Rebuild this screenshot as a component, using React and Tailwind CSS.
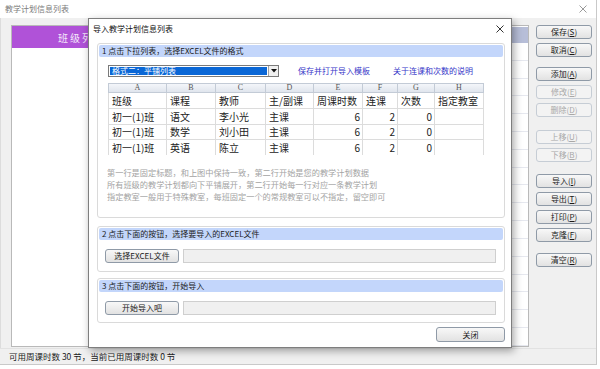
import React from "react";

function XIcon({ className = "", color = "#444" }) {
  return (
    <svg width="8" height="8" viewBox="0 0 8 8" className={className}>
      <path d="M0.5 0.5 L7.5 7.5 M7.5 0.5 L0.5 7.5" stroke={color} strokeWidth="1" fill="none" />
    </svg>
  );
}

function Btn({ label, k, disabled, className = "" }) {
  return (
    <div
      className={`flex items-center justify-center h-[14px] rounded-[3px] border text-[8px] leading-none ${
        disabled
          ? "border-[#c6cdd5] text-[#a8a8a8] bg-[#f3f3f3]"
          : "border-[#8f9aa7] text-[#1a1a1a] bg-linear-to-b from-[#f8f8f8] to-[#e2e2e2]"
      } ${className}`}
    >
      <span>
        {label}(<span className="underline">{k}</span>)
      </span>
    </div>
  );
}

function PlainBtn({ children, className = "" }) {
  return (
    <div
      className={`flex items-center justify-center rounded-[3px] border border-[#8f9aa7] text-[8px] leading-none text-[#1a1a1a] bg-linear-to-b from-[#f8f8f8] to-[#e2e2e2] ${className}`}
    >
      {children}
    </div>
  );
}

const cols = ["A", "B", "C", "D", "E", "F", "G", "H"];
const rows = [
  ["班级", "课程", "教师", "主/副课", "周课时数", "连课", "次数", "指定教室"],
  ["初一(1)班", "语文", "李小光", "主课", "6", "2", "0", ""],
  ["初一(1)班", "数学", "刘小田", "主课", "6", "2", "0", ""],
  ["初一(1)班", "英语", "陈立", "主课", "6", "2", "0", ""],
];
const rowH = ["h-[16px]", "h-[16px]", "h-[15px]", "h-[15px]"];

function SectionHeader({ children }) {
  return (
    <div className="h-[12px] bg-[#c3d6fb] rounded-[2px] flex items-center pl-[3px] text-[8px] leading-none text-[#1a1a1a]">
      {children}
    </div>
  );
}

export default function App() {
  return (
    <div className="relative w-[600px] h-[369px] overflow-hidden bg-white font-['Noto_Sans_CJK_SC','Noto_Sans',sans-serif]">
      {/* Background window */}
      <div className="flex flex-col w-[597px] h-[365px] border-r border-b border-[#c9c9c9] bg-[#f0f0f0]">
        <div className="h-[18px] flex items-center justify-between bg-white pl-[5px] pr-[9px]">
          <span className="text-[8px] leading-none text-[#7c7c7c]">教学计划信息列表</span>
          <XIcon color="#9a9a9a" />
        </div>
        <div className="flex-1 flex pt-[7px] pl-[10px] border-l border-[#dcdcdc]">
          {/* left class list */}
          <div className="w-[142px] h-[322px] bg-white border border-[#b9b9b9] flex flex-col">
            <div className="h-[22px] bg-[#b052d8] flex items-center justify-center text-[10px] tracking-[2px] text-[#f4e8fa]">
              班级列表
            </div>
          </div>
          {/* main grid */}
          <div className="ml-[2px] w-[374px] h-[322px] bg-white border border-[#b9b9b9] flex flex-col">
            <div className="h-[16px] bg-[#b7bed8] mt-[1px]" />
            {Array.from({ length: 17 }).map((_, i) => (
              <div key={i} className="h-[18px] border-b border-[#e6e8ef]" />
            ))}
          </div>
          {/* buttons */}
          <div className="ml-[7px] w-[56px] flex flex-col">
            <Btn label="保存" k="S" />
            <Btn label="取消" k="C" className="mt-[4px]" />
            <Btn label="添加" k="A" className="mt-[10px]" />
            <Btn label="修改" k="E" disabled className="mt-[4px]" />
            <Btn label="删除" k="D" disabled className="mt-[4px]" />
            <Btn label="上移" k="U" disabled className="mt-[13px]" />
            <Btn label="下移" k="B" disabled className="mt-[4px]" />
            <Btn label="导入" k="I" className="mt-[12px]" />
            <Btn label="导出" k="T" className="mt-[4px]" />
            <Btn label="打印" k="P" className="mt-[4px]" />
            <Btn label="克隆" k="F" className="mt-[4px]" />
            <Btn label="清空" k="R" className="mt-[11px]" />
          </div>
        </div>
        <div className="h-[16px] flex items-center pl-[9px] text-[8.5px] leading-none text-[#1a1a1a] border-t border-[#e2e2e2]">
          可用周课时数 30 节，当前已用周课时数 0 节
        </div>
      </div>

      {/* Dialog */}
      <div className="absolute left-[88px] top-[18px] w-[424px] h-[330px] bg-white border border-[#7e7e7e] shadow-[2px_3px_8px_rgba(0,0,0,0.35)] flex flex-col">
        <div className="h-[19px] flex items-center justify-between pl-[4px] pr-[7px]">
          <span className="text-[8px] leading-none text-[#111]">导入教学计划信息列表</span>
          <XIcon color="#333" />
        </div>

        {/* Section 1 */}
        <div className="mt-[5px] ml-[8px] w-[408px] h-[175px] border border-[#dadada] rounded-[3px] p-[1px] flex flex-col">
          <SectionHeader>1 点击下拉列表，选择EXCEL文件的格式</SectionHeader>
          <div className="mt-[8px] ml-[9px] flex items-center">
            <div className="w-[171px] h-[12px] border border-[#7a7a7a] bg-white flex">
              <div className="flex-1 m-[1px] bg-[#0a67d6] flex items-center pl-[2px] text-[8px] leading-none text-white">
                格式二：平铺列表
              </div>
              <div className="w-[10px] border-l border-[#a0a0a0] bg-[#f0f0f0] flex items-center justify-center">
                <svg width="6" height="4" viewBox="0 0 6 4">
                  <path d="M0 0 L6 0 L3 3.5 Z" fill="#111" />
                </svg>
              </div>
            </div>
            <span className="ml-[19px] text-[8px] leading-none text-[#3535c8]">保存并打开导入模板</span>
            <span className="ml-[23px] text-[8px] leading-none text-[#3535c8]">关于连课和次数的说明</span>
          </div>
          {/* table */}
          <div className="mt-[6px] ml-[9px] w-[376px] grid grid-cols-[59px_49px_50px_48px_49px_35px_37px_49px]">
            {cols.map((c) => (
              <div
                key={c}
                className="h-[10px] flex items-center justify-center border-t border-b border-r border-[#c3cbd6] first:border-l bg-linear-to-b from-[#f4f6fa] to-[#e0e5ed] font-['Liberation_Serif',serif] text-[8px] leading-none text-[#555]"
              >
                {c}
              </div>
            ))}
            {rows.map((r, ri) =>
              r.map((cell, ci) => {
                const num = ri > 0 && ci >= 4 && ci <= 6;
                return (
                  <div
                    key={ri + "-" + ci}
                    className={`${rowH[ri]} flex items-center ${
                      num ? "justify-end pr-[2px]" : "pl-[3px]"
                    } border-r border-[#dcdcdc] ${ri < 3 ? "border-b" : ""} ${
                      ci === 0 ? "border-l" : ""
                    } text-[10px] leading-none text-[#222] whitespace-nowrap overflow-hidden`}
                  >
                    {cell}
                  </div>
                );
              })
            )}
          </div>
          <div className="mt-[11px] ml-[8px] text-[8.2px] leading-[12px] text-[#a3a3a3] whitespace-nowrap">
            <div>第一行是固定标题，和上图中保持一致，第二行开始是您的教学计划数据</div>
            <div>所有班级的教学计划都向下平铺展开，第二行开始每一行对应一条教学计划</div>
            <div>指定教室一般用于特殊教室，每班固定一个的常规教室可以不指定，留空即可</div>
          </div>
        </div>

        {/* Section 2 */}
        <div className="mt-[8px] ml-[8px] w-[408px] h-[46px] border border-[#dadada] rounded-[3px] p-[1px] flex flex-col">
          <SectionHeader>2 点击下面的按钮，选择要导入的EXCEL文件</SectionHeader>
          <div className="mt-[9px] ml-[6px] flex items-center">
            <PlainBtn className="w-[74px] h-[14px]">选择EXCEL文件</PlainBtn>
            <div className="ml-[4px] w-[313px] h-[14px] bg-[#f0f0f0] border border-[#cfcfcf]" />
          </div>
        </div>

        {/* Section 3 */}
        <div className="mt-[6px] ml-[8px] w-[408px] h-[45px] border border-[#dadada] rounded-[3px] p-[1px] flex flex-col">
          <SectionHeader>3 点击下面的按钮，开始导入</SectionHeader>
          <div className="mt-[9px] ml-[6px] flex items-center">
            <PlainBtn className="w-[74px] h-[14px]">开始导入吧</PlainBtn>
            <div className="ml-[4px] w-[313px] h-[14px] bg-[#f0f0f0] border border-[#cfcfcf]" />
          </div>
        </div>

        <div className="mt-[4px] flex justify-end pr-[6px]">
          <PlainBtn className="w-[69px] h-[15px]">关闭</PlainBtn>
        </div>
      </div>
    </div>
  );
}
